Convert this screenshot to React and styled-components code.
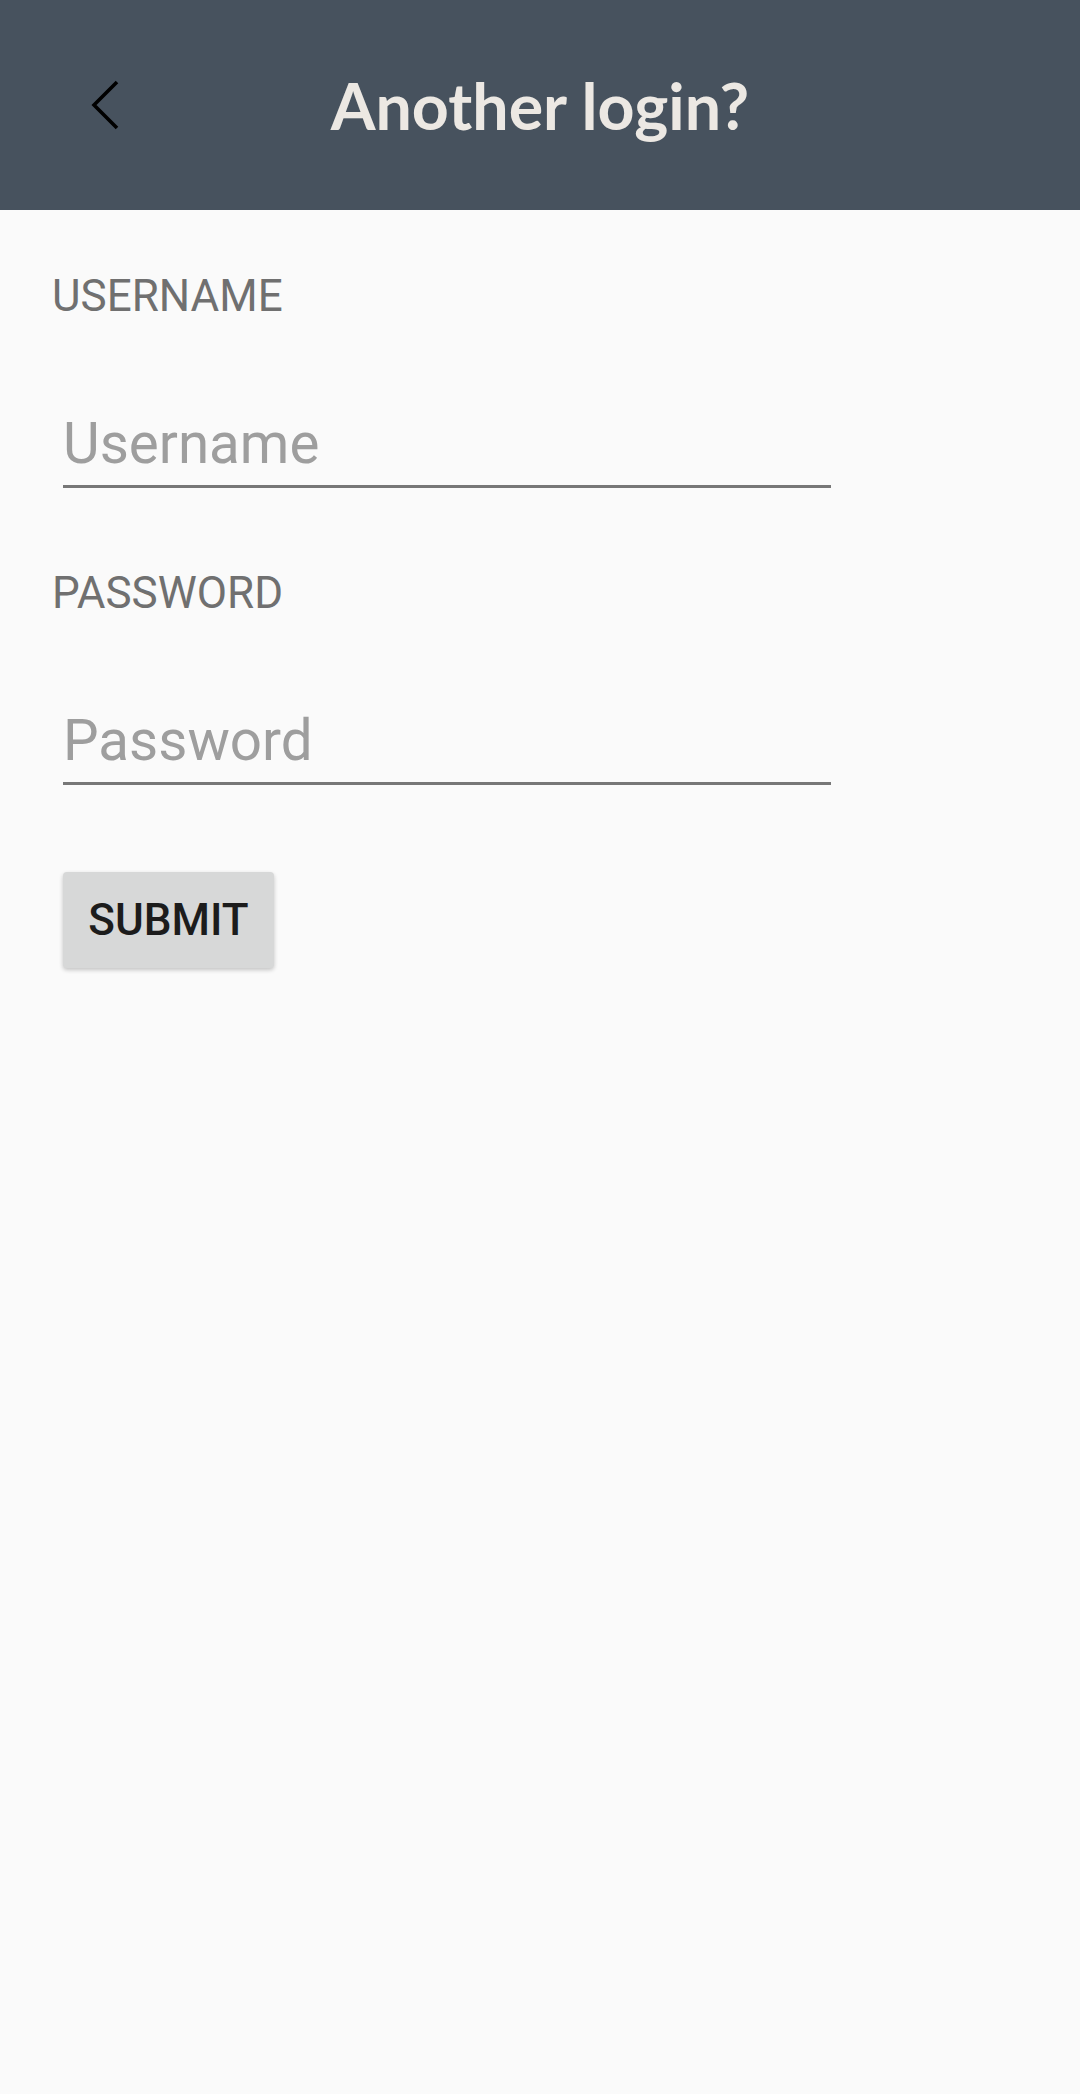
import React from 'react'
import styled, { createGlobalStyle } from 'styled-components'

const GlobalStyle = createGlobalStyle`
  html, body {
    margin: 0;
    padding: 0;
    background: #fafafa;
  }
  * {
    box-sizing: border-box;
  }
`

const App = () => {
    return (
        <Page>
            <GlobalStyle />
            <Header>
                <BackButton aria-label="Back">
                    <svg width="30" height="52" viewBox="0 0 30 52">
                        <polyline points="26,3 3,26 26,49" fill="none" stroke="#000" strokeWidth="3.6" strokeLinejoin="miter" />
                    </svg>
                </BackButton>
                <Title>Another login?</Title>
                <span />
            </Header>

            <Form onSubmit={e => e.preventDefault()}>
                <Label>USERNAME</Label>
                <Input type="text" placeholder="Username" />
                <Label $top={80}>PASSWORD</Label>
                <Input type="password" placeholder="Password" />
                <Button type="submit">SUBMIT</Button>
            </Form>
        </Page>
    )
}

const Page = styled.div`
  min-height: 100vh;
  background: #fafafa;
  font-family: Roboto, "Noto Sans", sans-serif;
`

const Header = styled.header`
  height: 210px;
  background: #47525e;
  display: grid;
  grid-template-columns: 1fr auto 1fr;
  align-items: center;
`

const BackButton = styled.button`
  justify-self: start;
  margin-left: 91px;
  width: 32px;
  height: 52px;
  padding: 0;
  border: none;
  background: transparent;
  display: flex;
  align-items: center;
  cursor: pointer;
`

const Title = styled.h1`
  margin: 0;
  font-family: Lato, "Open Sans", sans-serif;
  font-weight: 700;
  font-size: 64.5px;
  line-height: 76px;
  color: #ece8e3;
`

const Form = styled.form`
  display: flex;
  flex-direction: column;
  align-items: flex-start;
  padding: 61px 0 0 52px;
`

const Label = styled.label`
  margin-top: ${p => (p.$top ? p.$top : 0)}px;
  font-size: 44px;
  line-height: 50px;
  color: #707070;
`

const Input = styled.input`
  margin: 90px 0 0 11px;
  width: 768px;
  height: 77px;
  padding: 0 0 8px 0;
  border: none;
  border-bottom: 3px solid #777777;
  background: transparent;
  font-family: Roboto, sans-serif;
  font-size: 56.5px;
  line-height: 66px;
  color: #212121;
  outline: none;

  &::placeholder {
    color: #9e9e9e;
  }
`

const Button = styled.button`
  margin: 87px 0 0 11px;
  width: 211px;
  height: 96px;
  border: none;
  border-radius: 4px;
  background: #d7d8d8;
  box-shadow: 0 2px 4px rgba(0, 0, 0, 0.22);
  font-family: Roboto, sans-serif;
  font-weight: 500;
  font-size: 44px;
  color: #1c1c1c;
  cursor: pointer;
`

export default App
